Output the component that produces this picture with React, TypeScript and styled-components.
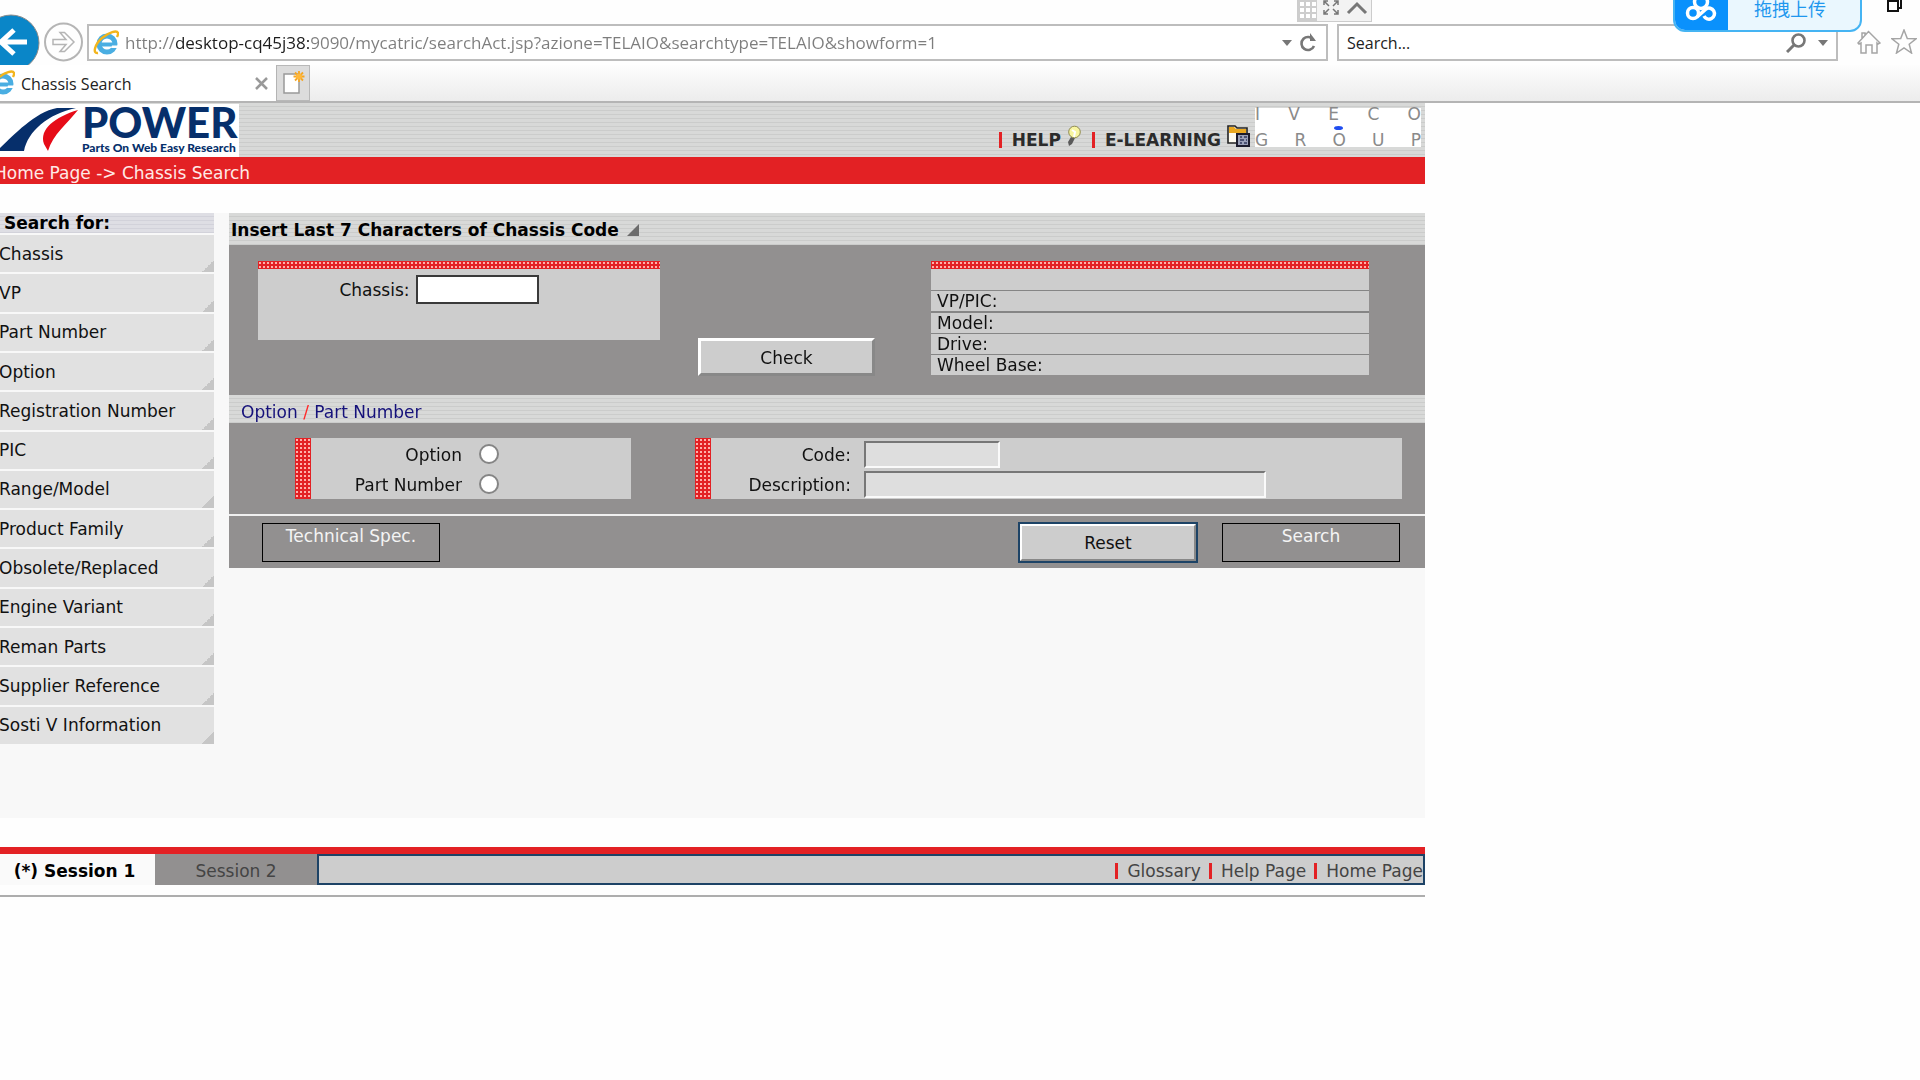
import React from "react";
import styled, { createGlobalStyle, css } from "styled-components";

const RED = "#e32124";
const PANEL = "#cdcdcd";
const SLATE = "#929090";
const NAVY = "#1d4366";

const stripes = css`
  background: repeating-linear-gradient(to bottom, #d8d9d8 0 3px, #cbcccb 3px 4px);
`;

const dots = css`
  background-color: ${RED};
  background-image: radial-gradient(circle, #ffb0aa 0 1px, transparent 1px);
  background-size: 4px 4px;
`;

const GlobalStyle = createGlobalStyle`
  * { box-sizing: border-box; }
  body {
    margin: 0;
    background: #fefefe;
    color: #111;
    font-family: "DejaVu Sans", Verdana, sans-serif;
    font-size: 17px;
    line-height: 20px;
    overflow-x: hidden;
  }
  button, input { font: inherit; color: inherit; margin: 0; border-radius: 0; }
  a { color: inherit; text-decoration: none; }
  svg { display: block; flex: none; }
`;

/* ---------- browser frame ---------- */

const Frame = styled.header`
  font-family: "Open Sans", "Noto Sans", sans-serif;
  font-size: 16px;
  border-bottom: 2px solid #b4b4b4;
`;

const AddressRow = styled.div`
  display: flex;
  align-items: flex-end;
  height: 65px;
  padding-right: 3px;
`;

const PlainButton = styled.button`
  display: block;
  padding: 0;
  border: 0;
  background: none;
`;

const ForwardButton = styled(PlainButton)`
  padding: 0 4px 3px;
`;

const Field = styled.div<{ $grow?: boolean }>`
  display: flex;
  align-items: center;
  height: 37px;
  margin: 0 9px 4px 0;
  padding: 0 8px 0 4px;
  gap: 6px;
  border: 2px solid #bdbdbd;
  background: #fff;
  flex: ${(p) => (p.$grow ? "1 1 0" : "0 1 501px")};
  min-width: 0;
`;

const UrlInput = styled.input`
  flex: 1;
  min-width: 0;
  padding: 0;
  border: 0;
  outline: 0;
  font-size: 17px;
  line-height: 24px;
  color: transparent;
  background: linear-gradient(to right, #7d7d7d 0 51px, #1c1c1c 51px 184px, #7d7d7d 184px);
  background-clip: text;
`;

const SearchInput = styled.input`
  flex: 1;
  min-width: 0;
  padding: 0 4px;
  border: 0;
  outline: 0;
  background: none;
  &::placeholder { color: #222; opacity: 1; }
`;

const ToolIcons = styled.div`
  display: flex;
  gap: 10px;
  padding: 0 0 11px 10px;
`;

const TabRow = styled.div`
  display: flex;
  height: 36px;
  background: linear-gradient(to bottom, #fdfdfd, #ececec);
`;

const Tab = styled.div`
  display: flex;
  align-items: center;
  gap: 6px;
  width: 277px;
  padding-right: 8px;
  background: #fff;
  border-right: 1px solid #b4b4b4;
`;

const TabTitle = styled.span`
  flex: 1;
  padding-top: 2px;
  color: #222;
`;

const NewTab = styled(PlainButton)`
  width: 33px;
  padding-left: 6px;
  border: 1px solid #b8b8b8;
  border-left: 0;
  background: #dcdcdc;
`;

const MiniBar = styled.div`
  position: absolute;
  top: 0;
  left: 1297px;
  display: flex;
  border: 1px solid #ccc;
  border-top: 0;
  background: #f3f3f3;
`;

const UploadBadge = styled.button`
  position: absolute;
  top: -8px;
  right: 58px;
  display: flex;
  width: 189px;
  height: 40px;
  padding: 0;
  overflow: hidden;
  border: 2px solid #45b4f3;
  border-radius: 0 0 12px 12px;
  background: #eaf7fe;
  color: #1f97ee;
  font-family: "Noto Sans CJK SC", sans-serif;
  font-size: 18px;
  line-height: 28px;
`;

const UploadText = styled.span`
  flex: 1;
  text-align: center;
  padding-right: 8px;
`;

const RestoreButton = styled(PlainButton)`
  position: absolute;
  top: 0;
  right: 17px;
`;

/* ---------- page ---------- */

const Page = styled.div`
  width: 100%;
  max-width: 1425px;
  overflow: hidden;
`;

const Banner = styled.div`
  display: flex;
  align-items: flex-start;
  height: 54px;
  padding: 1px 4px 0 0;
  ${stripes}
`;

const Brand = styled.div`
  display: flex;
  width: 239px;
  height: 53px;
  background: #fff;
  color: #062f6b;
  font-family: Lato, sans-serif;
  font-weight: 900;
`;

const BrandWords = styled.div`
  display: flex;
  flex-direction: column;
  gap: 2px;
  padding-top: 2px;
`;

const BrandName = styled.span`
  font-size: 42px;
  line-height: 32px;
`;

const BrandLine = styled.span`
  font-size: 12px;
  line-height: 16px;
  white-space: nowrap;
`;

const BannerLinks = styled.nav`
  display: flex;
  align-items: flex-end;
  height: 46px;
  margin-left: auto;
  font-weight: bold;
  color: #2b2b2b;
`;

const BarLink = styled.a`
  display: flex;
  align-items: center;
  white-space: nowrap;
  &::before {
    content: "";
    width: 3px;
    height: 16px;
    margin-right: 10px;
    background: ${RED};
  }
`;

const BannerLink = styled(BarLink)`
  height: 20px;
  margin-right: 11px;
  &:last-child { margin-right: 5px; }
  svg { margin: 0 0 8px 6px; }
`;

const Iveco = styled.div`
  width: 166px;
  height: 39px;
  margin-top: 4px;
  display: flex;
  flex-direction: column;
  justify-content: space-between;
  background: #fff;
  color: #8a8a8a;
  line-height: 13px;
`;

const Spread = styled.div`
  display: flex;
  justify-content: space-between;
`;

const BlueDot = styled.i`
  align-self: center;
  width: 9px;
  height: 4px;
  border-radius: 50%;
  background: #1f4df0;
`;

const Crumbs = styled.nav`
  height: 27px;
  padding-top: 6px;
  margin-left: -6px;
  background: ${RED};
  color: #ffe9e6;
`;

const Body = styled.div`
  display: flex;
  gap: 15px;
  margin-top: 29px;
  min-height: 605px;
  background: #f8f8f8;
`;

const Side = styled.nav`
  width: 214px;
  flex: none;
`;

const SideTitle = styled.h2`
  height: 20px;
  margin: 0 0 2px;
  padding: 1px 0 0 4px;
  font-size: 17px;
  line-height: 19px;
  color: #000;
  background: repeating-linear-gradient(to bottom, #dedee4 0 3px, #d2d2da 3px 4px);
`;

const SideList = styled.ul`
  display: grid;
  grid-auto-rows: 1fr;
  gap: 2px;
  height: 509px;
  margin: 0;
  padding: 0;
  list-style: none;
`;

const SideItem = styled.li`
  display: flex;
  align-items: center;
  margin-left: -1px;
  background: linear-gradient(135deg, transparent 50%, #c6c6c6 50%) right bottom / 12px 12px no-repeat #e1e1e1;
`;

const Main = styled.main`
  flex: 1;
  min-width: 0;
`;

const Heading = styled.h1`
  display: flex;
  align-items: center;
  gap: 8px;
  height: 32px;
  margin: 0;
  padding: 2px 0 0 2px;
  font-size: 17px;
  color: #000;
  ${stripes}
`;

const SubHeading = styled.h2`
  height: 28px;
  margin: 0;
  padding: 7px 0 0 12px;
  font-size: 17px;
  font-weight: normal;
  color: #15117a;
  ${stripes}
  b { font-weight: normal; color: #ff2a2a; }
`;

const ChassisSection = styled.form`
  display: grid;
  grid-template-columns: minmax(0, 402fr) auto minmax(0, 438fr);
  align-items: start;
  height: 150px;
  padding: 16px 56px 0 29px;
  background: ${SLATE};
`;

const ChassisBox = styled.div`
  display: flex;
  align-items: center;
  justify-content: center;
  gap: 6px;
  height: 71px;
  padding: 0 40px 30px 0;
  background: ${PANEL};
`;

const DotBox = styled.div`
  &::before {
    content: "";
    display: block;
    height: 8px;
    ${dots}
  }
`;

const ChassisInput = styled.input`
  width: 123px;
  height: 29px;
  padding: 0 3px;
  border: 2px solid #3a3a3a;
  outline: 0;
  background: #fff;
`;

const CheckCell = styled.div`
  padding: 77px 56px 0 38px;
`;

const RaisedButton = styled.button<{ $focused?: boolean }>`
  width: ${(p) => (p.$focused ? "180px" : "177px")};
  height: ${(p) => (p.$focused ? "41px" : "38px")};
  padding: 2px 0 0;
  border: ${(p) => (p.$focused ? "4px" : "3px")} solid;
  border-color: #fff #888 #888 #fff;
  background: ${PANEL};
  ${(p) =>
    p.$focused &&
    css`
      outline: 2px solid ${NAVY};
      outline-offset: -2px;
    `}
`;

const FlatButton = styled.button`
  display: flex;
  justify-content: center;
  align-items: flex-start;
  width: 178px;
  height: 39px;
  padding: 2px 0 0;
  border: 1px solid #000;
  background: none;
  color: #f4f4f4;
`;

const Specs = styled.table`
  width: 100%;
  border-spacing: 0;
  th {
    height: 21px;
    padding: 0 0 0 6px;
    border-top: 1px solid #858585;
    background: ${PANEL};
    font-weight: normal;
    text-align: left;
  }
  tr:first-child th { border-top: 0; }
  tr:nth-child(3) th { height: 22px; border-top-width: 2px; }
`;

const OptionSection = styled.section`
  display: grid;
  grid-template-columns: minmax(0, 336fr) minmax(0, 707fr);
  gap: 64px;
  height: 91px;
  padding: 15px 23px 15px 66px;
  background: ${SLATE};
`;

const SideDots = styled.div`
  display: flex;
  background: ${PANEL};
  &::before {
    content: "";
    width: 16px;
    flex: none;
    ${dots}
  }
`;

const FieldGrid = styled.div<{ $label: number; $gap: number }>`
  flex: 1;
  display: grid;
  grid-template-columns: ${(p) => p.$label}px minmax(0, 1fr);
  grid-template-rows: 1fr 1fr;
  align-items: center;
  padding-top: 1px;
  column-gap: ${(p) => p.$gap}px;
  label { text-align: right; padding-top: 2px; }
`;

const Radio = styled.input`
  appearance: none;
  width: 20px;
  height: 20px;
  border: 2px solid #858585;
  border-radius: 50%;
  background: #fff;
`;

const SunkInput = styled.input<{ $w: number }>`
  width: ${(p) => p.$w}px;
  max-width: 100%;
  height: 27px;
  padding: 0 4px;
  border: 2px solid;
  border-color: #777 #fafafa #fafafa #777;
  background: #dedede;
`;

const Actions = styled.section`
  display: flex;
  align-items: center;
  gap: 24px;
  height: 54px;
  padding: 0 25px 0 33px;
  border-top: 2px solid #f0f0f0;
  background: ${SLATE};
  ${RaisedButton} { margin-left: auto; }
`;

const Footer = styled.footer`
  display: flex;
  margin-top: 29px;
  border-top: 7px solid ${RED};
  height: 38px;
`;

const Session = styled.button<{ $active?: boolean }>`
  width: ${(p) => (p.$active ? "155px" : "162px")};
  padding: ${(p) => (p.$active ? "2px 6px 0 0" : "2px 0 0")};
  border: 0;
  background: ${(p) => (p.$active ? "#fafafa" : SLATE)};
  color: ${(p) => (p.$active ? "#000" : "#444")};
  font-weight: ${(p) => (p.$active ? "bold" : "normal")};
`;

const FooterLinks = styled.nav`
  flex: 1;
  display: flex;
  align-items: center;
  justify-content: flex-end;
  gap: 8px;
  border: 2px solid ${NAVY};
  padding-top: 2px;
  background: ${PANEL};
  color: #444;
  a::before { margin-right: 9px; }
`;

const EndRule = styled.hr`
  height: 2px;
  margin: 10px 0 0;
  border: 0;
  background: #adadad;
`;

/* ---------- drawings ---------- */

const IeLogo = () => (
  <svg width="26" height="26" viewBox="0 0 26 26" fill="none">
    <circle cx="14" cy="14" r="8" stroke="#4aaee2" strokeWidth="5" />
    <path d="M7 14.500h15" stroke="#4aaee2" strokeWidth="4" />
    <path d="M18 18h8v-2.500h-7z" fill="#fff" />
    <path d="M5 23C-1 24 2 14 9 8s15-8 16-5c.4 1 0 2-1 4" stroke="#f2b51d" strokeWidth="2.400" />
  </svg>
);

const Caret = () => (
  <svg width="10" height="6" viewBox="0 0 10 6"><path d="M0 0h10L5 6z" fill="#777" /></svg>
);

const BackIcon = () => (
  <svg width="40" height="51" viewBox="0 0 40 51">
    <circle cx="11" cy="29" r="28" fill="#0a86c8" stroke="#8b8b8b" />
    <path d="M27 28H4M14 16L1 28l13 12" fill="none" stroke="#fff" strokeWidth="5" />
  </svg>
);

const ForwardIcon = () => (
  <svg width="39" height="40" viewBox="0 0 39 40" fill="none" stroke="#b5b5b5" strokeWidth="2">
    <circle cx="19.500" cy="20" r="18.500" />
    <path d="M9 17.500h13l-6-7h4.500l9.500 9.500-9.500 9.500H16l6-7H9z" strokeWidth="1.500" />
  </svg>
);

const Swoosh = () => (
  <svg width="82" height="53" viewBox="0 0 82 53">
    <path d="M0 44C14 31 35 8 57 4h19C48 10 28 27 24 47H0z" fill="#062f6b" />
    <path d="M78 6C55 13 39 25 44 40l4 7C53 30 67 20 78 6z" fill="#e60c18" />
  </svg>
);

const Bulb = () => (
  <svg width="14" height="22" viewBox="0 0 14 22">
    <path d="M4 12l-3 5 1 4 3-2 3-6z" fill="#5a5a5a" />
    <circle cx="7.500" cy="7" r="5.800" fill="#f8f5a0" stroke="#918c50" />
    <path d="M5 5l3 2-1 5" fill="none" stroke="#fff" strokeWidth="2" />
  </svg>
);

const Folder = () => (
  <svg width="23" height="22" viewBox="0 0 23 22">
    <path d="M1 1h7l2 2h10v15H1z" fill="#fdfbf0" stroke="#222" strokeWidth="1.600" />
    <path d="M2 2h5l2 2h10v4H2z" fill="#e9a820" />
    <path d="M10 9h12v12H10z" fill="#9aa0b8" stroke="#1b1b2c" strokeWidth="2" />
    <path d="M13 12h2m2 0h3m-7 3h4m2 0h1m-7 3h2m2 0h3" stroke="#32385c" strokeWidth="1.500" />
  </svg>
);

const sideLinks = [
  "Chassis", "VP", "Part Number", "Option", "Registration Number", "PIC", "Range/Model",
  "Product Family", "Obsolete/Replaced", "Engine Variant", "Reman Parts",
  "Supplier Reference", "Sosti V Information",
];

const specRows = ["", "VP/PIC:", "Model:", "Drive:", "Wheel Base:"];

const Letters = ({ text }: { text: string }) => (
  <Spread>{text.split("").map((c, i) => <span key={i}>{c}</span>)}</Spread>
);

const BrowserFrame = () => (
  <Frame>
    <AddressRow>
      <PlainButton aria-label="Back"><BackIcon /></PlainButton>
      <ForwardButton aria-label="Forward"><ForwardIcon /></ForwardButton>
      <Field $grow>
        <IeLogo />
        <UrlInput
          aria-label="Address"
          defaultValue="http://desktop-cq45j38:9090/mycatric/searchAct.jsp?azione=TELAIO&searchtype=TELAIO&showform=1"
        />
        <Caret />
        <PlainButton aria-label="Refresh">
          <svg width="20" height="20" viewBox="0 0 20 20" fill="none">
            <path d="M15.500 7A6.500 6.500 0 1 0 16 13" stroke="#777" strokeWidth="2.600" />
            <path d="M12 0v8h6z" fill="#777" />
          </svg>
        </PlainButton>
      </Field>
      <Field>
        <SearchInput aria-label="Search the web" placeholder="Search..." />
        <PlainButton aria-label="Go">
          <svg width="26" height="20" viewBox="0 0 26 20" fill="none" stroke="#777">
            <circle cx="12.500" cy="7.500" r="6" strokeWidth="2.600" />
            <path d="M8 12l-7 7" strokeWidth="3" />
          </svg>
        </PlainButton>
        <Caret />
      </Field>
      <ToolIcons>
        <PlainButton aria-label="Home">
          <svg width="24" height="24" viewBox="0 0 24 24" fill="none" stroke="#a5a5a5" strokeWidth="1.500">
            <path d="M1 13L11.500 1.500 23 13l-2 1-1-1v10h-5v-8H9v8H4V13l-2 1zM5 8V3h3v2" />
          </svg>
        </PlainButton>
        <PlainButton aria-label="Favorites">
          <svg width="26" height="25" viewBox="0 0 26 25" fill="none" stroke="#a5a5a5" strokeWidth="1.500">
            <path d="M13 1l3.300 8.500 8.700.3-6.800 5.400L20.500 24 13 18.800 5.500 24l2.300-8.800L1 9.800l8.700-.3z" />
          </svg>
        </PlainButton>
      </ToolIcons>
    </AddressRow>
    <TabRow>
      <Tab>
        <svg width="15" height="26" viewBox="11 0 15 26" fill="none">
          <circle cx="14" cy="14" r="8" stroke="#4aaee2" strokeWidth="5" />
          <path d="M7 14.500h15" stroke="#4aaee2" strokeWidth="4" />
          <path d="M18 18h8v-2.500h-7z" fill="#fff" />
          <path d="M9 8c7-6 15-8 16-5 .4 1 0 2-1 4" stroke="#f2b51d" strokeWidth="2.400" />
        </svg>
        <TabTitle>Chassis Search</TabTitle>
        <PlainButton aria-label="Close tab">
          <svg width="13" height="13" viewBox="0 0 13 13" stroke="#999" strokeWidth="2.500">
            <path d="M1 1l11 11M12 1L1 12" />
          </svg>
        </PlainButton>
      </Tab>
      <NewTab aria-label="New tab">
        <svg width="22" height="24" viewBox="0 0 22 24">
          <path d="M1 3h15v19H1z" fill="#fff" stroke="#999" strokeWidth="1.500" />
          <path d="M16 0v11M10.500 5.500h11M12 1.500l8 8M20 1.500l-8 8" stroke="#f5a623" strokeWidth="1.800" />
          <circle cx="16" cy="5.500" r="3" fill="#ffb83a" />
        </svg>
      </NewTab>
    </TabRow>
    <MiniBar>
      <svg width="73" height="21" viewBox="0 0 73 21" fill="none">
        <path d="M0 0h19v21H0z" fill="#cdcdcd" />
        <path d="M2 2h4v4H2zM8 2h4v4H8zM14 2h4v4h-4zM2 8h4v4H2zM8 8h4v4H8zM14 8h4v4h-4zM2 14h4v4H2zM8 14h4v4H8zM14 14h4v4h-4z" fill="#fff" />
        <path d="M26 5V1h4M36 1h4v4M40 10v4h-4M30 14h-4v-4M26 1l5 5M40 1l-5 5M40 14l-5-5M26 14l5-5" stroke="#777" strokeWidth="1.500" />
        <path d="M50 13l9-9 9 9" stroke="#777" strokeWidth="3" />
      </svg>
    </MiniBar>
    <UploadBadge>
      <svg width="53" height="40" viewBox="0 0 53 40" fill="none">
        <path d="M0 0h53v40H0z" fill="#0a91fc" />
        <g stroke="#fff" strokeWidth="3.500">
          <circle cx="26" cy="8" r="6.500" />
          <circle cx="18" cy="19" r="5.500" />
          <path d="M22 23l9-8a5.500 5.500 0 1 1-2 7" />
        </g>
      </svg>
      <UploadText>拖拽上传</UploadText>
    </UploadBadge>
    <RestoreButton aria-label="Restore window">
      <svg width="16" height="13" viewBox="0 0 16 13" fill="none" stroke="#111" strokeWidth="2">
        <path d="M1 1h10v10H1zM11 8h3V0" />
      </svg>
    </RestoreButton>
  </Frame>
);

const App = () => (
  <>
    <GlobalStyle />
    <BrowserFrame />
    <Page>
      <Banner>
        <Brand>
          <Swoosh />
          <BrandWords>
            <BrandName>POWER</BrandName>
            <BrandLine>Parts On Web Easy Research</BrandLine>
          </BrandWords>
        </Brand>
        <BannerLinks>
          <BannerLink href="#help">HELP<Bulb /></BannerLink>
          <BannerLink href="#learning">E-LEARNING<Folder /></BannerLink>
        </BannerLinks>
        <Iveco>
          <Letters text="IVECO" />
          <BlueDot />
          <Letters text="GROUP" />
        </Iveco>
      </Banner>
      <Crumbs><a href="#home">Home Page</a> -&gt; Chassis Search</Crumbs>
      <Body>
        <Side>
          <SideTitle>Search for:</SideTitle>
          <SideList>
            {sideLinks.map((t) => (
              <SideItem key={t}><a href="#search">{t}</a></SideItem>
            ))}
          </SideList>
        </Side>
        <Main>
          <Heading>
            Insert Last 7 Characters of Chassis Code
            <svg width="12" height="12" viewBox="0 0 12 12"><path d="M12 0v12H0z" fill="#6c6c6c" /></svg>
          </Heading>
          <ChassisSection>
            <DotBox>
              <ChassisBox>
                <label htmlFor="chassis">Chassis:</label>
                <ChassisInput id="chassis" autoFocus />
              </ChassisBox>
            </DotBox>
            <CheckCell><RaisedButton type="button">Check</RaisedButton></CheckCell>
            <DotBox>
              <Specs>
                <tbody>
                  {specRows.map((r) => (<tr key={r}><th scope="row">{r}</th></tr>))}
                </tbody>
              </Specs>
            </DotBox>
          </ChassisSection>
          <SubHeading>Option <b>/</b> Part Number</SubHeading>
          <OptionSection>
            <SideDots>
              <FieldGrid $label={151} $gap={17}>
                <label htmlFor="by-option">Option</label>
                <Radio type="radio" name="by" id="by-option" />
                <label htmlFor="by-part">Part Number</label>
                <Radio type="radio" name="by" id="by-part" />
              </FieldGrid>
            </SideDots>
            <SideDots>
              <FieldGrid $label={140} $gap={13}>
                <label htmlFor="code">Code:</label>
                <SunkInput id="code" $w={136} />
                <label htmlFor="description">Description:</label>
                <SunkInput id="description" $w={402} />
              </FieldGrid>
            </SideDots>
          </OptionSection>
          <Actions>
            <FlatButton type="button">Technical Spec.</FlatButton>
            <RaisedButton type="reset" $focused>Reset</RaisedButton>
            <FlatButton type="button">Search</FlatButton>
          </Actions>
        </Main>
      </Body>
      <Footer>
        <Session $active>(*) Session 1</Session>
        <Session>Session 2</Session>
        <FooterLinks>
          <BarLink href="#glossary">Glossary</BarLink>
          <BarLink href="#help-page">Help Page</BarLink>
          <BarLink href="#home">Home Page</BarLink>
        </FooterLinks>
      </Footer>
      <EndRule />
    </Page>
  </>
);

export default App;
